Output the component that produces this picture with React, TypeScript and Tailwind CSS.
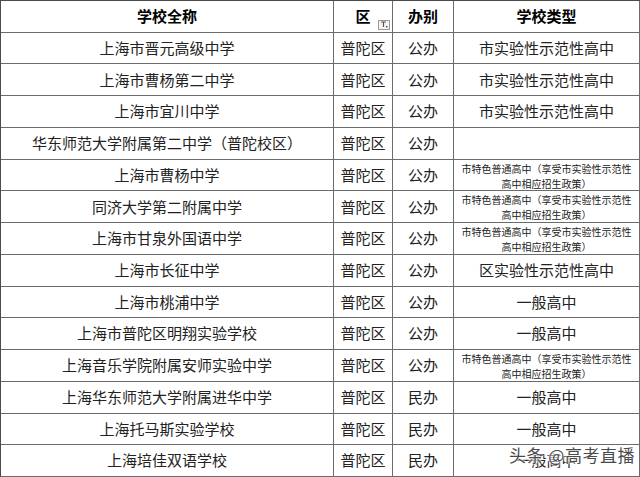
import { Fragment } from "react"

type Row = {
  name: string
  district: string
  kind: string
  type: string
  small?: boolean
}

const NOTE = "市特色普通高中（享受市实验性示范性高中相应招生政策）"

const rows: Row[] = [
  { name: "上海市晋元高级中学", district: "普陀区", kind: "公办", type: "市实验性示范性高中" },
  { name: "上海市曹杨第二中学", district: "普陀区", kind: "公办", type: "市实验性示范性高中" },
  { name: "上海市宜川中学", district: "普陀区", kind: "公办", type: "市实验性示范性高中" },
  { name: "华东师范大学附属第二中学（普陀校区）", district: "普陀区", kind: "公办", type: "" },
  { name: "上海市曹杨中学", district: "普陀区", kind: "公办", type: NOTE, small: true },
  { name: "同济大学第二附属中学", district: "普陀区", kind: "公办", type: NOTE, small: true },
  { name: "上海市甘泉外国语中学", district: "普陀区", kind: "公办", type: NOTE, small: true },
  { name: "上海市长征中学", district: "普陀区", kind: "公办", type: "区实验性示范性高中" },
  { name: "上海市桃浦中学", district: "普陀区", kind: "公办", type: "一般高中" },
  { name: "上海市普陀区明翔实验学校", district: "普陀区", kind: "公办", type: "一般高中" },
  { name: "上海音乐学院附属安师实验中学", district: "普陀区", kind: "公办", type: NOTE, small: true },
  { name: "上海华东师范大学附属进华中学", district: "普陀区", kind: "民办", type: "一般高中" },
  { name: "上海托马斯实验学校", district: "普陀区", kind: "民办", type: "一般高中" },
  { name: "上海培佳双语学校", district: "普陀区", kind: "民办", type: "一般高中" },
]

const cell =
  "flex items-center justify-center border-r border-b border-[#6b6b6b] overflow-hidden whitespace-nowrap"

function FilterButton() {
  return (
    <span className="absolute right-[2px] bottom-[2px] flex h-[10px] w-[12px] items-center justify-center border border-[#9a9a9a] bg-[#f4f4f4]">
      <svg width="8" height="7" viewBox="0 0 8 7">
        <path d="M1 1h5M3.5 1v5" stroke="#555" strokeWidth="1.2" fill="none" />
        <rect x="6" y="5" width="1.5" height="1.5" fill="#555" />
      </svg>
    </span>
  )
}

export default function App() {
  return (
    <div
      className="relative h-[477px] w-[640px] overflow-hidden bg-white text-[#222]"
      style={{ fontFamily: '"Noto Sans CJK SC", "Noto Sans", sans-serif' }}
    >
      <div className="grid h-[477px] grid-cols-[333px_59px_61px_186px] grid-rows-[repeat(15,minmax(0,1fr))] border-l border-t border-[#4a4a4a] text-[15px]">
        {/* header */}
        <div className={`${cell} font-bold text-black`}>学校全称</div>
        <div className={`${cell} relative font-bold text-black`}>
          区
          <FilterButton />
        </div>
        <div className={`${cell} font-bold text-black`}>办别</div>
        <div className={`${cell} font-bold text-black`}>学校类型</div>

        {rows.map((r) => (
          <Fragment key={r.name}>
            <div className={cell}>{r.name}</div>
            <div className={cell}>{r.district}</div>
            <div className={cell}>{r.kind}</div>
            {r.small ? (
              <div className={`${cell} items-start`}>
                <p className="mt-[1px] whitespace-normal px-[3px] text-center text-[10px] leading-[15px]">
                  {r.type}
                </p>
              </div>
            ) : (
              <div className={cell}>{r.type}</div>
            )}
          </Fragment>
        ))}
      </div>

      {/* watermark */}
      <div
        className="absolute left-[509px] top-[444px] text-[17px] leading-[22px] tracking-[0.5px] text-[#4a4a4a]"
        style={{ textShadow: "0 0 2px #fff, 0 0 2px #fff, 0 0 3px #fff" }}
      >
        头条 @高考直播
      </div>
    </div>
  )
}
